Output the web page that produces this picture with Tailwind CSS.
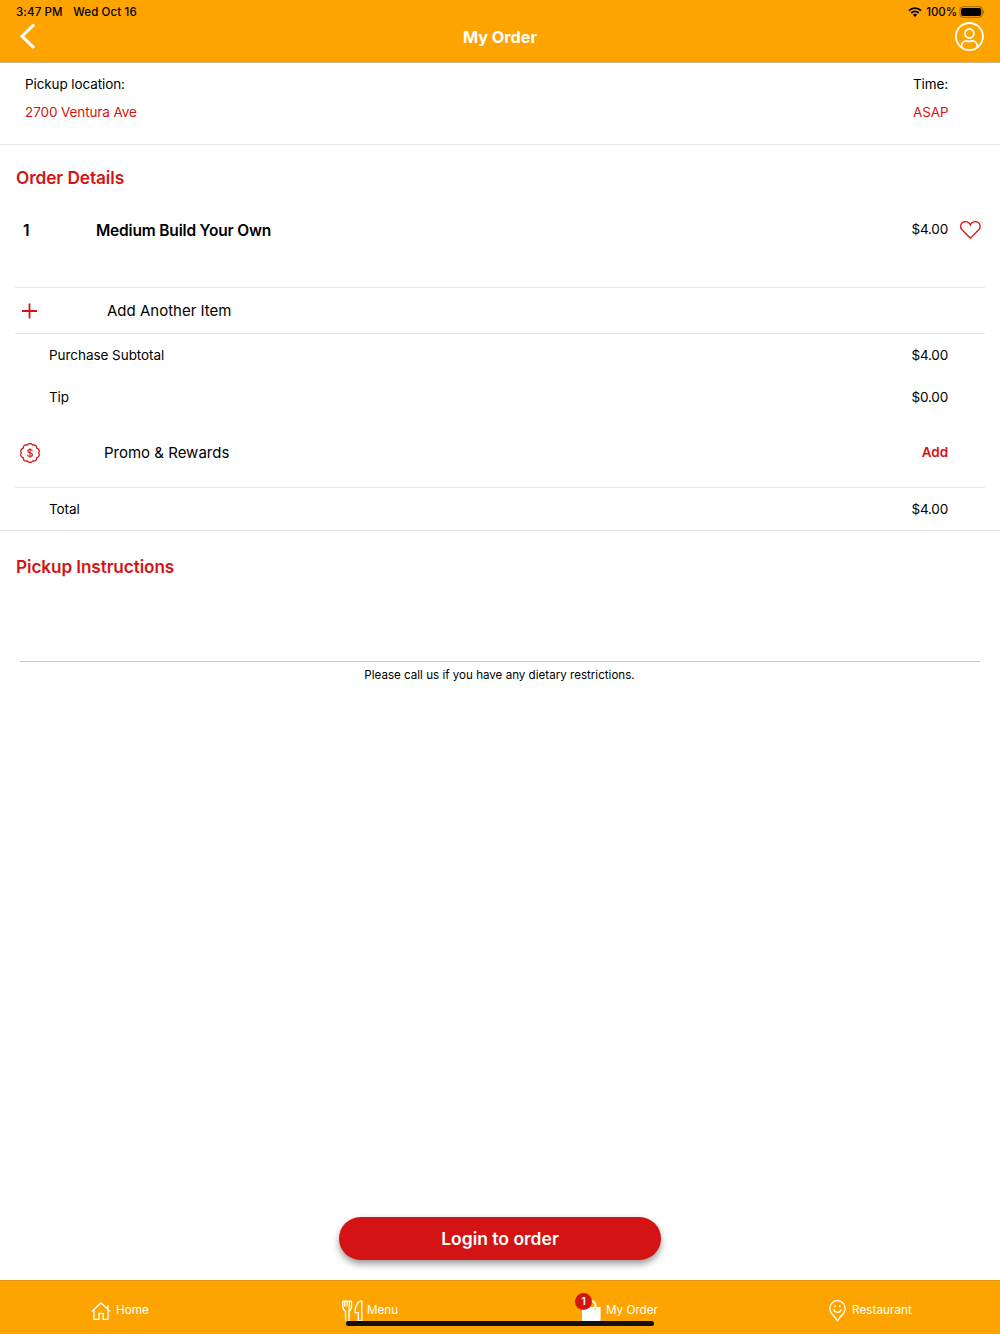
<!DOCTYPE html>
<html lang="en">
<head>
    <meta charset="UTF-8">
    <meta name="viewport" content="width=device-width, initial-scale=1.0">
    <title>My Order</title>
    <script src="https://cdn.jsdelivr.net/npm/@tailwindcss/browser@4"></script>
</head>
<body class="bg-white text-black font-['Inter',sans-serif] h-[1334px] flex flex-col overflow-hidden text-[13.5px] tracking-[-0.1px]">

    <!-- Header -->
    <header class="h-[63px] shrink-0 bg-[#fea400] border-b border-[#c9b28a]">
        <div class="h-6 pl-4 pr-[15px] flex items-center justify-between text-[11.5px] font-medium tracking-[0.13px]">
            <div class="flex gap-[10.5px] pt-[2px]">
                <span>3:47 PM</span>
                <span>Wed Oct 16</span>
            </div>
            <div class="flex items-center">
                <svg class="w-[14px] h-[10px] mr-1" viewBox="0 0 14 10">
                    <path d="M1 3.6a8.6 8.6 0 0 1 12 0" fill="none" stroke="#000" stroke-width="1.9"/>
                    <path d="M3.3 6a5.3 5.3 0 0 1 7.4 0" fill="none" stroke="#000" stroke-width="1.8"/>
                    <path d="M7 9.9L4.9 7.8a3 3 0 0 1 4.2 0z"/>
                </svg>
                <span class="pt-[2px] tracking-[-0.05px]">100%</span>
                <svg class="w-[26px] h-3 ml-[2px]" viewBox="0 0 26 12">
                    <rect x="0.9" y="0.7" width="22.4" height="10.6" rx="3.2" fill="none" stroke="#000" stroke-opacity="0.45" stroke-width="0.8"/>
                    <rect x="2" y="1.9" width="20.2" height="8.2" rx="2"/>
                    <path d="M24.2 4.3v3.4q1-.5 1-1.7t-1-1.7z" fill-opacity="0.5"/>
                </svg>
            </div>
        </div>
        <div class="h-[26px] px-4 grid grid-cols-[1fr_auto_1fr] grid-rows-[26px] items-center">
            <svg class="w-6 h-7" viewBox="0 0 24 28" fill="none" stroke="#fff" stroke-width="3">
                <path d="M18 1.600L6 13.200L18 24.800"/>
            </svg>
            <h1 class="text-white text-[16.3px] font-bold tracking-[-0.03px]">My Order</h1>
            <svg class="w-[30px] h-[30px] justify-self-end" viewBox="0 0 30 30" fill="none" stroke="#fff" stroke-width="1.8">
                <circle cx="15.400" cy="14.500" r="13.500"/>
                <circle cx="15.400" cy="11.500" r="4.500"/>
                <path d="M7.600 25.500v-1.600a5 5 0 0 1 4.600-5q3.200 1 6.400 0a5 5 0 0 1 4.600 5v1.600"/>
            </svg>
        </div>
    </header>

    <!-- Pickup location and time -->
    <section class="h-[82px] shrink-0 border-b border-[#e6e6e6] pt-[7px] pl-[25px] pr-[52px] flex justify-between leading-7">
        <div>
            <p>Pickup location:</p>
            <p class="text-[#d41414]">2700 Ventura Ave</p>
        </div>
        <div class="w-[35px] whitespace-nowrap">
            <p>Time:</p>
            <p class="text-[#d41414]">ASAP</p>
        </div>
    </section>

    <!-- Order details -->
    <h2 class="pt-[17px] pl-4 text-[17.3px] leading-8 font-semibold text-[#d41414]">Order Details</h2>
    <section class="mx-[15px]">
        <div class="h-[94px] border-b border-[#e6e6e6] flex">
            <div class="flex-1 h-[72px] flex items-center pr-1">
                <span class="w-[81px] pl-2 pt-[2px] text-[15.5px] font-semibold">1</span>
                <span class="flex-1 pt-[2px] text-[15.5px] font-semibold tracking-[-0.18px]">Medium Build Your Own</span>
                <span class="mr-[11px] pb-[2px] tracking-[-0.2px]">$4.00</span>
                <svg class="w-[22px] h-5" viewBox="0 0 22 20" fill="none" stroke="#d41414" stroke-width="1.3">
                    <path d="M11.400 18.200L3 9.800C.6 7.400 1.400 1.700 6.400 1.700c2.500 0 4.200 1.500 5 3.300 .8-1.800 2.500-3.300 5-3.300 5 0 5.800 5.700 3.400 8.100z"/>
                </svg>
            </div>
        </div>
        <div class="h-[46px] border-b border-[#e6e6e6] flex items-center">
            <svg class="w-4 h-4 ml-[6px] mr-[70px]" viewBox="0 0 16 16" stroke="#d41414" stroke-width="1.8">
                <path d="M8.500 .5v15M1 8h15"/>
            </svg>
            <span class="pt-[2px] text-[15px] tracking-normal">Add Another Item</span>
        </div>
        <div class="h-[42px] pl-[34px] pr-[37px] flex items-center justify-between">
            <span class="tracking-[-0.05px]">Purchase Subtotal</span>
            <span class="tracking-[-0.2px]">$4.00</span>
        </div>
        <div class="h-[42px] pl-[34px] pr-[37px] flex items-center justify-between">
            <span>Tip</span>
            <span class="tracking-[-0.2px]">$0.00</span>
        </div>
        <div class="h-[70px] pr-[37px] border-b border-[#e6e6e6] flex items-center">
            <svg class="w-5 h-5 ml-[4.5px] mr-[64.5px]" viewBox="0 0 20 20" fill="none" stroke="#d41414" stroke-width="1.3">
                <path d="M7.200 2Q10-.8 12.800 2Q16.700 1.300 16.800 5.200Q20.600 7 18.600 10Q20.600 13 16.800 14.800Q16.700 18.700 12.800 18Q10 20.800 7.200 18Q3.300 18.700 3.200 14.800Q-.6 13 1.400 10Q-.6 7 3.200 5.200Q3.300 1.300 7.200 2z"/>
                <path d="M12.300 8c-.2-1-1-1.500-2.300-1.500s-2.200.6-2.200 1.600c0 2.400 4.600 1.200 4.600 3.700 0 1-.9 1.700-2.400 1.700s-2.300-.6-2.500-1.700M10 5.200v9.600" stroke-width="1.1"/>
            </svg>
            <span class="flex-1 pt-[2px] text-[15px] tracking-normal">Promo &amp; Rewards</span>
            <span class="font-semibold text-[#d41414]">Add</span>
        </div>
    </section>
    <div class="h-[43px] shrink-0 pl-[49px] pr-[52px] border-b border-[#e6e6e6] flex items-center justify-between">
        <span>Total</span>
        <span class="tracking-[-0.2px]">$4.00</span>
    </div>

    <!-- Pickup instructions -->
    <section class="h-[131px] shrink-0 mx-5 border-b border-[#c8c8c8]">
        <h2 class="-ml-1 text-[17.2px] leading-[72px] font-semibold text-[#d41414]">Pickup Instructions</h2>
    </section>
    <p class="text-center text-[11.6px] leading-[26px] tracking-normal pr-px">Please call us if you have any dietary restrictions.</p>

    <button class="mt-auto mb-5 self-center w-[322px] h-[43px] pt-[2px] shrink-0 rounded-full bg-[#d41414] text-white text-[17.5px] font-semibold tracking-normal shadow-[0_4px_7px_rgba(0,0,0,0.4)]">Login to order</button>

    <!-- Tab bar -->
    <nav class="relative h-[54px] shrink-0 bg-[#fea400] border-t border-[#e0990f] pt-[6px] grid grid-cols-4 text-white text-[11.7px] tracking-normal">
        <a class="flex items-center pl-[91px] gap-[5px]">
            <svg class="w-5 h-5" viewBox="0 0 20 20" fill="none" stroke="#fff" stroke-width="1.3">
                <path d="M.8 10.500L10 2l9.200 8.500M3 9v9.300h5V12.500h4.200v5.800H17V4.300"/>
            </svg>
            <span>Home</span>
        </a>
        <a class="flex items-center pl-[92px] gap-1">
            <svg class="w-[21px] h-[22px]" viewBox="0 0 21 22" fill="none" stroke="#fff" stroke-width="1.3">
                <path d="M3.500 21V11.500Q.8 9.500 .8 6V2q0-1.200 1-1.200t1 1.200v4.500M2.800 2Q2.900 .8 4 .8t1.100 1.200v4.500M5.100 2Q5.200 .8 6.200 .8T7.400 2v4.500M7.400 2Q7.500 .8 8.400 .8T9.600 2v4q0 3.500-2.700 5.500V21z"/>
                <path d="M19.800 21V.8Q16.500 .8 14.500 5T13.200 12.700H16.300V21z"/>
            </svg>
            <span>Menu</span>
        </a>
        <a class="flex items-center pl-[81px] gap-[5px]">
            <span class="relative">
                <svg class="w-5 h-[22px]" viewBox="0 0 20 22">
                    <path d="M5.500 8V5.500a4.500 4.500 0 0 1 9 0V8" fill="none" stroke="#fff" stroke-width="2"/>
                    <path d="M1 7h18.600v13q0 2-2 2H3q-2 0-2-2z" fill="#fff"/>
                    <circle cx="14.300" cy="9" r=".8" fill="#fea400"/>
                </svg>
                <span class="absolute -left-[6px] -top-[7px] w-[17px] h-[17px] rounded-full bg-[#d41414] text-[10px] font-semibold flex items-center justify-center">1</span>
            </span>
            <span>My Order</span>
        </a>
        <a class="flex items-center pl-[79px] gap-[6px]">
            <svg class="w-[17px] h-[22px]" viewBox="0 0 17 22" fill="none" stroke="#fff" stroke-width="1.3">
                <path d="M8.500 21Q6.500 17.500 3.500 14.500Q.8 11.800 .8 8.400a7.700 7.700 0 0 1 15.400 0Q16.200 11.800 13.500 14.500Q10.500 17.500 8.500 21z"/>
                <path d="M4.600 9.300q.9 3 3.900 3t3.900-3"/>
                <path d="M6.200 5.300v2M10.800 5.300v2"/>
            </svg>
            <span class="tracking-[0.05px]">Restaurant</span>
        </a>
        <!-- Home indicator -->
        <div class="absolute left-[346px] top-[40px] w-[308px] h-[5px] rounded-full bg-[#111]"></div>
    </nav>

</body>
</html>
